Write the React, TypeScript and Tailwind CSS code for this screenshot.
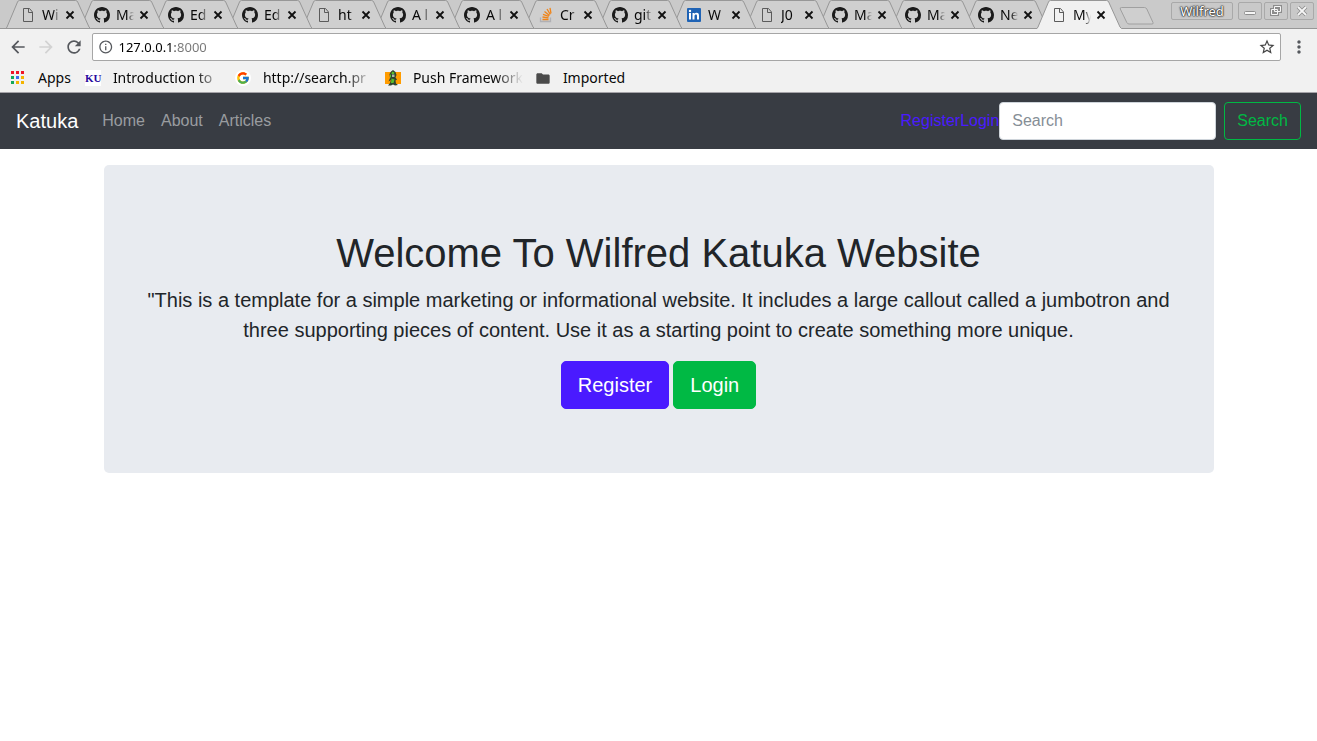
import type { ReactNode } from "react";
import { FcGoogle } from "react-icons/fc";
import {
  MdArrowBack,
  MdArrowForward,
  MdFolder,
  MdInfoOutline,
  MdMoreVert,
  MdRefresh,
  MdStarBorder,
} from "react-icons/md";

type IconKind = "file" | "github" | "stack" | "linkedin";

const tabs: { icon: IconKind; title: string }[] = [
  { icon: "file", title: "Wi" },
  { icon: "github", title: "Ma" },
  { icon: "github", title: "Ed" },
  { icon: "github", title: "Ed" },
  { icon: "file", title: "ht" },
  { icon: "github", title: "A l" },
  { icon: "github", title: "A l" },
  { icon: "stack", title: "Cr" },
  { icon: "github", title: "git" },
  { icon: "linkedin", title: "W" },
  { icon: "file", title: "J0" },
  { icon: "github", title: "Ma" },
  { icon: "github", title: "Ma" },
  { icon: "github", title: "Ne" },
  { icon: "file", title: "My" },
];

const fade = "[mask-image:linear-gradient(to_right,#000_60%,transparent)]";
const longFade = "[mask-image:linear-gradient(to_right,#000_75%,transparent)]";

function TabIcon({ kind }: { kind: IconKind }) {
  if (kind === "github")
    return (
      <svg width="16" height="16" viewBox="0 0 16 16" fill="#1b1b1b" aria-hidden>
        <path d="M8 0C3.58 0 0 3.58 0 8c0 3.54 2.29 6.53 5.47 7.59.4.07.55-.17.55-.38 0-.19-.01-.82-.01-1.49-2.01.37-2.53-.49-2.69-.94-.09-.23-.48-.94-.82-1.13-.28-.15-.68-.52-.01-.53.63-.01 1.08.58 1.23.82.72 1.21 1.87.87 2.33.66.07-.52.28-.87.51-1.07-1.78-.2-3.64-.89-3.64-3.95 0-.87.31-1.59.82-2.15-.08-.2-.36-1.02.08-2.12 0 0 .67-.21 2.2.82.64-.18 1.32-.27 2-.27s1.36.09 2 .27c1.53-1.04 2.2-.82 2.2-.82.44 1.1.16 1.92.08 2.12.51.56.82 1.27.82 2.15 0 3.07-1.87 3.75-3.65 3.95.29.25.54.73.54 1.48 0 1.07-.01 1.93-.01 2.2 0 .21.15.46.55.38A8.01 8.01 0 0 0 16 8c0-4.42-3.58-8-8-8z" />
      </svg>
    );
  if (kind === "file")
    return (
      <svg width="16" height="16" viewBox="0 0 16 16" fill="none" stroke="#5b5b5b" aria-hidden>
        <path d="M3.5 1.5h6l3 3.5v9.5h-9zM8.5 1.5v4h4" />
      </svg>
    );
  if (kind === "linkedin")
    return (
      <svg width="16" height="16" viewBox="0 0 16 16" aria-hidden>
        <rect x="1" y="1" width="14" height="14" rx="1" fill="#1f63b5" />
        <g fill="#fff">
          <circle cx="4" cy="4" r="1.2" />
          <path d="M3 6h2v6.5H3zM6.5 6h2v.9c.4-.7 1.1-1.1 2.1-1.1 1.9 0 2.4 1.2 2.4 2.9v3.8h-2V9.1c0-.9-.2-1.5-1.1-1.5s-1.4.6-1.4 1.5v3.4h-2z" />
        </g>
      </svg>
    );
  return (
    <svg width="16" height="16" viewBox="0 0 16 16" fill="none" aria-hidden>
      <path d="M2.5 10.5v4h10v-4" stroke="#b0b0b4" strokeWidth="1.3" />
      <path
        d="M4.5 12.5h6M4.5 10l6 .9M5 7.3l5.8 2M6.5 4.5l5 4M9 2l3.3 5.3M12 .8l1 5.5"
        stroke="#f08418"
        strokeWidth="1.3"
      />
    </svg>
  );
}

const tabOutline = "M0 28.5l1-1.5L11.5 2q.6-1.5 2-1.5h56q1.5 0 2.2 1.5L83 27l1.5 1.5";

function Tab({ icon, title, index }: { icon: IconKind; title: string; index: number }) {
  const active = index === tabs.length - 1;
  return (
    <li
      className={`relative h-full shrink-0 ${index < 9 ? "w-[74px]" : "w-[73px]"}`}
      style={{ zIndex: active ? 30 : 20 - index }}
    >
      <svg className="absolute left-0 top-0" width="88" height="29" viewBox="0 0 88 29" aria-hidden>
        <path d={`${tabOutline}v.5H0z`} fill={active ? "#f1f1f1" : "#cfcfcf"} />
        <path d={active ? tabOutline : `${tabOutline}z`} fill="none" stroke="#979797" />
      </svg>
      <div className="relative flex h-full items-center pt-px pl-[14px]">
        <TabIcon kind={icon} />
        <a href="#" className={`ml-[6px] w-[18px] overflow-hidden whitespace-nowrap ${fade}`}>
          {title}
        </a>
        <button type="button" aria-label={`Close ${title}`} className="ml-[5px]">
          <svg width="10" height="10" viewBox="0 0 10 10" stroke="#111" strokeWidth="1.8" aria-hidden>
            <path d="M1.5 1.500l7 7M8.500 1.500l-7 7" />
          </svg>
        </button>
      </div>
    </li>
  );
}

function WindowButton({ label, children }: { label: string; children: ReactNode }) {
  return (
    <button
      type="button"
      aria-label={label}
      className="flex h-[18px] w-6 items-center justify-center rounded-xs border border-[#a9a9a9] bg-[#c9c9c9]"
    >
      <svg width="14" height="14" viewBox="0 0 14 14" fill="none" aria-hidden>
        {children}
      </svg>
    </button>
  );
}

function TabStrip() {
  return (
    <div className="flex h-[29px] items-start bg-[#cacaca] shadow-[inset_0_-1px_0_#979797]">
      <ul className="isolate flex h-full pl-[6px]">
        {tabs.map((tab, i) => (
          <Tab key={i} index={i} {...tab} />
        ))}
      </ul>
      <button type="button" aria-label="New tab" className="mt-[7px] ml-[9px]">
        <svg width="36" height="18" viewBox="0 0 36 18" aria-hidden>
          <path d="M2.5.5h23q1.5 0 2.3 1.5l6.2 13.500q.6 1.500-1 1.500H10q-1.500 0-2.200-1.500L1.300 2Q.8.5 2.5.5z" fill="#cfcfcf" stroke="#a0a0a0" />
        </svg>
      </button>
      <div className="mt-[2px] mr-[3px] ml-auto flex gap-[2px]">
        <button
          type="button"
          className="mr-[3px] h-[18px] w-[62px] rounded-xs border border-[#a9a9a9] bg-[#c9c9c9] text-[13px] leading-4 text-white [text-shadow:0_0_1px_#222,0_0_1px_#222,0_0_2px_#333,0_0_2px_#333]"
        >
          Wilfred
        </button>
        <WindowButton label="Minimize">
          <rect x="1.500" y="7.500" width="11" height="3" rx="1" fill="#f6f6f6" stroke="#8d8d8d" />
        </WindowButton>
        <WindowButton label="Restore">
          <path d="M5.500 2.500h6v5h-6zM2.500 5.500h6v5h-6z" stroke="#8d8d8d" strokeWidth="3" />
          <path d="M5.500 2.500h6v5h-6z" stroke="#f6f6f6" />
          <path d="M2.500 5.500h6v5h-6z" stroke="#f6f6f6" />
        </WindowButton>
        <WindowButton label="Close window">
          <path d="M3 3l8 8M11 3l-8 8" stroke="#8d8d8d" strokeWidth="3.500" />
          <path d="M3 3l8 8M11 3l-8 8" stroke="#f6f6f6" strokeWidth="1.800" />
        </WindowButton>
      </div>
    </div>
  );
}

function AddressBar() {
  return (
    <div className="flex h-[33px] items-center gap-2 pt-[3px] pr-2 pl-2 text-[#55585d]">
      <button type="button" aria-label="Back"><MdArrowBack size={20} /></button>
      <button type="button" aria-label="Forward" className="text-[#d2d2d2]"><MdArrowForward size={20} /></button>
      <button type="button" aria-label="Reload"><MdRefresh size={20} /></button>
      <label className="flex h-7 flex-1 items-center rounded-xs border border-[#a6a6a6] bg-white pr-1 pl-[5px]">
        <MdInfoOutline size={16} />
        <input
          aria-label="Address"
          defaultValue="127.0.0.1:8000"
          className="ml-[5px] w-full bg-[linear-gradient(to_right,#000_57px,#777_57px)] bg-clip-text text-[13px] text-transparent outline-none"
        />
        <button type="button" aria-label="Bookmark this page" className="text-[#444]"><MdStarBorder size={18} /></button>
      </label>
      <button type="button" aria-label="Menu"><MdMoreVert size={20} /></button>
    </div>
  );
}

function Bookmark({ icon, children }: { icon: ReactNode; children: string }) {
  return (
    <a href="#" className="flex w-[150px] items-center gap-3 pr-3">
      <span className="flex size-4 shrink-0 items-center justify-center">{icon}</span>
      <span className={`flex-1 overflow-hidden whitespace-nowrap ${children.length > 8 ? longFade : ""}`}>
        {children}
      </span>
    </a>
  );
}

function BookmarksBar() {
  const dots = ["#f01428", "#f01428", "#f01428", "#12a75a", "#3f6df0", "#f4b400", "#12a75a", "#f4b400", "#f4b400"];
  return (
    <nav aria-label="Bookmarks" className="flex h-[31px] items-center border-b border-[#a5a3a8] pt-[2px] pl-[10px]">
      <a href="#" className="mr-[14px] flex items-center gap-3">
        <svg width="16" height="16" viewBox="0 0 16 16" aria-hidden>
          {dots.map((c, i) => (
            <rect key={i} x={1 + (i % 3) * 5} y={1 + Math.floor(i / 3) * 5} width="3" height="3" fill={c} />
          ))}
        </svg>
        Apps
      </a>
      <Bookmark icon={<span className="size-4 bg-white text-center font-['Liberation_Serif',serif] text-[11px] leading-4 font-bold text-[#2a0aa0]">KU</span>}>
        Introduction to
      </Bookmark>
      <Bookmark icon={<span className="rounded-full bg-white p-px"><FcGoogle size={14} /></span>}>
        http://search.pr
      </Bookmark>
      <Bookmark
        icon={
          <svg width="16" height="16" viewBox="0 0 16 16" aria-hidden>
            <path d="M0 2h16v12H0z" fill="#ff9c00" />
            <path d="M8 0l2.5 2 1 3-1 2.500 1.500 2-1.500 1 .5 3 2 1.500-3 .5-2-1-2 1H3l2-2.500 1-3-2.500 1.500L5 8 4.500 4 6 1.500z" fill="#2f4430" />
            <path d="M7 1.500l2.500 1-.5 1.500H6.500zM6.500 8.500l3 1-1 3.500H6zM5 4.500h1v3H5z" fill="#58c02c" />
            <path d="M7 4.500h2.500v2.500H7z" fill="#a9bba8" />
          </svg>
        }
      >
        Push Framework
      </Bookmark>
      <Bookmark icon={<MdFolder size={17} color="#4b4b4b" />}>Imported</Bookmark>
    </nav>
  );
}

function SiteNav() {
  return (
    <nav aria-label="Main" className="flex h-14 items-center bg-[#383c43] px-4">
      <a href="#" className="mr-4 text-xl leading-[30px] text-white">Katuka</a>
      <ul className="flex flex-1 text-[#9a9ca0]">
        {["Home", "About", "Articles"].map((item) => (
          <li key={item}><a href="#" className="block p-2">{item}</a></li>
        ))}
      </ul>
      <a href="#" className="text-[#4a1aff]">Register</a>
      <a href="#" className="text-[#4a1aff]">Login</a>
      <form className="flex gap-2" onSubmit={(e) => e.preventDefault()}>
        <input
          type="search"
          aria-label="Search"
          placeholder="Search"
          className="h-[38px] w-[217px] rounded-sm border border-[#ced4da] bg-white px-3 text-[#495057] placeholder:text-[#868e96]"
        />
        <button type="submit" className="h-[38px] rounded-sm border border-[#00b944] px-3 text-[#00b944]">Search</button>
      </form>
    </nav>
  );
}

export default function App() {
  return (
    <div className="min-h-screen bg-white">
      <header className="bg-[#f1f1f1] font-['Noto_Sans',sans-serif] text-[14px] leading-5 text-[#080808]">
        <TabStrip />
        <AddressBar />
        <BookmarksBar />
      </header>
      <div className="font-['Liberation_Sans',Arial,sans-serif] text-base text-[#212529]">
        <SiteNav />
        <main className="mx-auto mt-4 max-w-[1140px] px-[15px]">
          <section className="rounded-[5px] bg-[#e8ebf0] px-8 py-16 text-center">
            <h1 className="mb-2 text-[40px] leading-[48px]">Welcome To Wilfred Katuka Website</h1>
            <p className="mb-4 text-xl leading-[30px]">
              "This is a template for a simple marketing or informational website. It includes a large callout called
              a jumbotron and three supporting pieces of content. Use it as a starting point to create something more
              unique.
            </p>
            <div className="flex justify-center gap-1 text-xl leading-[30px] text-white">
              <a href="#" className="rounded-[5px] border border-[#4a1aff] bg-[#4a1aff] px-4 py-2">Register</a>
              <a href="#" className="rounded-[5px] border border-[#00b944] bg-[#00b944] px-4 py-2">Login</a>
            </div>
          </section>
        </main>
      </div>
    </div>
  );
}
